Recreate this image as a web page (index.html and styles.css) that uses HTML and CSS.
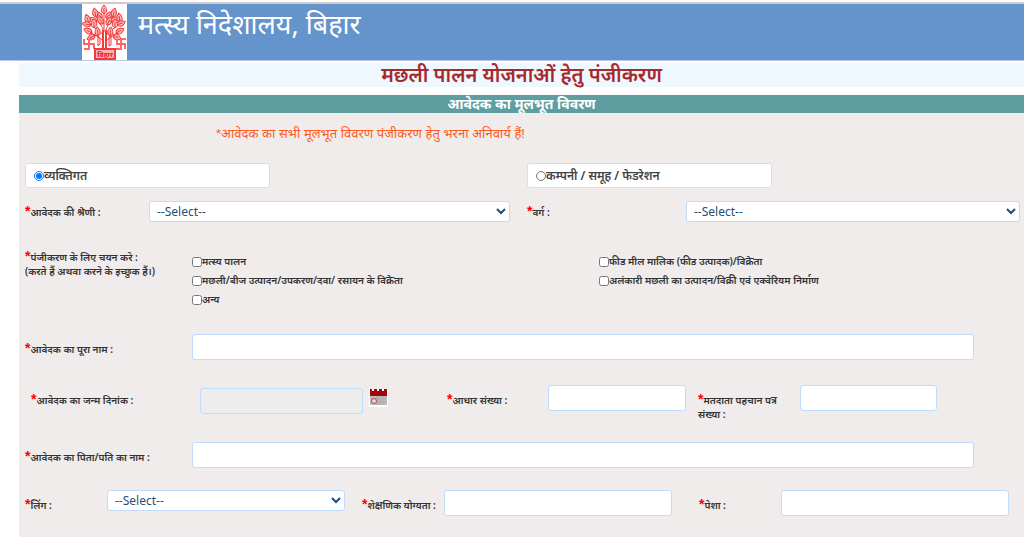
FILE: index.html
```html
<!DOCTYPE html>
<html lang="hi">
<head>
<meta charset="utf-8">
<meta name="viewport" content="width=device-width, initial-scale=1">
<title>मत्स्य निदेशालय, बिहार</title>
<link rel="stylesheet" href="styles.css">
</head>
<body>
<header class="masthead">
  <svg class="logo" viewBox="0 0 45 56" role="img" aria-label="बिहार सरकार">
    <defs>
      <path id="leaf" d="M0 0C-4-2-3-6 0-9C3-6 4-2 0 0ZM0 0V-6"/>
    </defs>
    <rect width="45" height="56" fill="#fff"/>
    <g fill="none" stroke="#f23a3a" stroke-width="1">
      <path stroke-width="2" d="M21 45V26M24 45V26"/>
      <path d="M21 37C18 33 12 31 6 28M24 37C28 33 33 31 38 28M21 31C18 26 11 24 7 19M24 31C28 26 34 24 38 18M22 28C20 21 17 19 14 12M23 28C26 21 28 18 31 12M22 27V9M16 42V32L18 34V40ZM27 42V33L29 32V41Z"/>
      <g fill="#ffb9b9">
        <use href="#leaf" transform="translate(22 10)"/>
        <use href="#leaf" transform="translate(20 14) rotate(-48)"/>
        <use href="#leaf" transform="translate(24 14) rotate(48)"/>
        <use href="#leaf" transform="translate(21 20) rotate(-35)"/>
        <use href="#leaf" transform="translate(25 21) rotate(28)"/>
        <use href="#leaf" transform="translate(14 13) rotate(-12)"/>
        <use href="#leaf" transform="translate(15 18) rotate(-65)"/>
        <use href="#leaf" transform="translate(31 13) rotate(12)"/>
        <use href="#leaf" transform="translate(29 18) rotate(60)"/>
        <use href="#leaf" transform="translate(7 19) rotate(-20)"/>
        <use href="#leaf" transform="translate(9 21) rotate(-80)"/>
        <use href="#leaf" transform="translate(12 24) rotate(0)"/>
        <use href="#leaf" transform="translate(38 18) rotate(-8)"/>
        <use href="#leaf" transform="translate(35 21) rotate(68)"/>
        <use href="#leaf" transform="translate(33 24) rotate(0)"/>
        <use href="#leaf" transform="translate(10 29) rotate(-62)"/>
        <use href="#leaf" transform="translate(13 31) rotate(-120)"/>
        <use href="#leaf" transform="translate(16 32) rotate(-5)"/>
        <use href="#leaf" transform="translate(34 29) rotate(62)"/>
        <use href="#leaf" transform="translate(31 31) rotate(118)"/>
        <use href="#leaf" transform="translate(28 32) rotate(5)"/>
      </g>
      <g stroke="#f66" stroke-width="2">
        <path d="M2 35V40H12V45M7 35V45H2M7 35H12"/>
        <path d="M35 35V40H43V45M39 35V45H34M39 35H44"/>
      </g>
      <rect x="13" y="45" width="20" height="10" fill="#ffb3b3" stroke-width="2"/>
    </g>
    <text class="logo-text" x="23" y="53" text-anchor="middle">बिहार</text>
  </svg>
  <h1 class="site-name">मत्स्य निदेशालय, बिहार</h1>
</header>

<main class="page">
  <h2 class="page-title">मछली पालन योजनाओं हेतु पंजीकरण</h2>
  <h3 class="section-title">आवेदक का मूलभूत विवरण</h3>

  <form class="form">
    <p class="notice">*आवेदक का सभी मूलभूत विवरण पंजीकरण हेतु भरना अनिवार्य हैं!</p>

    <div class="row row-type">
      <label class="choice"><input type="radio" name="type" checked>व्यक्तिगत</label>
      <label class="choice choice-second"><input type="radio" name="type">कम्पनी / समूह / फेडरेशन</label>
    </div>

    <div class="row row-category">
      <label class="label" for="category"><span class="req">*</span>आवेदक की श्रेणी :</label>
      <select class="field select" id="category"><option>--Select--</option></select>
      <label class="label label-third" for="class"><span class="req">*</span>वर्ग :</label>
      <select class="field select" id="class"><option>--Select--</option></select>
    </div>

    <fieldset class="row row-activities" aria-labelledby="activities">
      <div class="label" id="activities"><span class="req">*</span>पंजीकरण के लिए चयन करे :<br>(करते हैं अथवा करने के इच्छुक हैं।)</div>
      <div class="checks">
        <label class="check"><input type="checkbox">मत्स्य पालन</label>
        <label class="check"><input type="checkbox">मछली/बीज उत्पादन/उपकरण/दवा/ रसायन के विक्रेता</label>
        <label class="check"><input type="checkbox">अन्य</label>
      </div>
      <div class="checks">
        <label class="check"><input type="checkbox">फीड मील मालिक (फीड उत्पादक)/विक्रेता</label>
        <label class="check"><input type="checkbox">अलंकारी मछली का उत्पादन/विक्री एवं एक्वेरियम निर्माण</label>
      </div>
    </fieldset>

    <div class="row row-name">
      <label class="label" for="name"><span class="req">*</span>आवेदक का पूरा नाम :</label>
      <input class="field" id="name" type="text">
    </div>

    <div class="row row-identity">
      <label class="label" for="dob"><span class="req">*</span>आवेदक का जन्म दिनांक :</label>
      <div class="date">
        <input class="field" id="dob" type="text" disabled>
        <button class="calendar" type="button" aria-label="दिनांक चुनें">
          <svg viewBox="0 0 19 19" aria-hidden="true">
            <rect y="1" width="19" height="18" fill="#fff"/>
            <rect x="1" y="8" width="17" height="9" fill="#bcbcbc"/>
            <path d="M8 8V17M11 8V17M14 8V17M1 11H18M1 14H18" stroke="#adadad"/>
            <path d="M1 1H3V3H5V1H8V3H10V1H13V3H15V1H18V8H1Z" fill="#a00610"/>
            <circle cx="5" cy="13" r="2.5" fill="#ddd" stroke="#d33c3c"/>
          </svg>
        </button>
      </div>
      <label class="label" for="aadhaar"><span class="req">*</span>आधार संख्या :</label>
      <input class="field" id="aadhaar" type="text">
      <label class="label label-voter" for="voter"><span class="req">*</span>मतदाता पहचान पत्र संख्या :</label>
      <input class="field" id="voter" type="text">
    </div>

    <div class="row row-name row-father">
      <label class="label" for="father"><span class="req">*</span>आवेदक का पिता/पति का नाम :</label>
      <input class="field" id="father" type="text">
    </div>

    <div class="row row-personal">
      <label class="label" for="gender"><span class="req">*</span>लिंग :</label>
      <select class="field select" id="gender"><option>--Select--</option></select>
      <label class="label label-third" for="education"><span class="req">*</span>शेक्षणिक योग्यता :</label>
      <input class="field" id="education" type="text">
      <label class="label label-last" for="job"><span class="req">*</span>पेशा :</label>
      <input class="field" id="job" type="text">
    </div>
  </form>
</main>
</body>
</html>
```
FILE: styles.css
```css
* {
  box-sizing: border-box;
}

body {
  margin: 0;
  background: #fff;
  color: #333;
  font-family: "Noto Sans", "Noto Sans Devanagari", sans-serif;
  font-size: 10px;
}

h1, h2, h3, p {
  margin: 0;
}

input, select, button {
  margin: 0;
  font: inherit;
}

/* Header */
.masthead {
  display: flex;
  align-items: flex-start;
  gap: 11px;
  margin-top: 2px;
  padding-left: 8%;
  border-top: 2px solid #d8c8c8;
  border-bottom: 1px solid #b5cbe8;
  background: #6593cc;
}

.logo {
  width: 45px;
  height: 56px;
  flex: none;
}

.logo-text {
  fill: #e02020;
  font-size: 7px;
  font-weight: 700;
}

.site-name {
  color: #fff;
  font-size: 27px;
  font-weight: 400;
  line-height: 40px;
}

.page {
  margin-left: 19px;
}

.page-title {
  margin: 2px 0 8px;
  background: #eff7ff;
  color: #a52a2a;
  font-size: 20px;
  font-weight: 600;
  line-height: 24px;
  text-align: center;
}

.section-title {
  background: #5f9ea0;
  color: #fff;
  font-size: 14px;
  font-weight: 700;
  line-height: 18px;
  text-align: center;
}

/* Form */
.form {
  min-height: calc(100vh - 113px);
  padding: 11px 0 20px 6px;
  background: #f0eceb;
}

.notice {
  padding-left: 191px;
  color: #ff5a1f;
  font-family: "Liberation Sans", "Noto Sans", "Noto Sans Devanagari", sans-serif;
  font-size: 13px;
  line-height: 20px;
}

.row {
  display: grid;
  align-items: start;
}

.row-type {
  grid-template-columns: 245fr 257fr 245fr 252fr;
  margin-top: 19px;
}

.choice {
  display: flex;
  align-items: center;
  height: 25px;
  padding-left: 8px;
  border: 1px solid #ddd;
  border-radius: 3px;
  background: #fff;
  color: #444;
  font-size: 12px;
  font-weight: 600;
}

.choice-second {
  grid-column: 3;
}

.choice input {
  width: 10px;
  height: 10px;
}

.label {
  padding-top: 4px;
  font-weight: 600;
  line-height: 14px;
}

.req {
  color: #f00;
  font-family: "Liberation Sans", sans-serif;
  font-size: 14px;
  font-weight: 700;
  line-height: 10px;
}

.field {
  width: 100%;
  min-width: 0;
  height: 26px;
  padding: 0 6px;
  border: 1px solid #bfdcfb;
  border-radius: 3px;
  background: #fff;
}

.field:disabled {
  background: #ededed;
}

.select {
  height: 21px;
  padding: 0 0 0 3px;
  color: #1f4e79;
  font-size: 12px;
}

.row-category {
  grid-template-columns: 124fr 361fr 176fr 334fr 4fr;
  margin-top: 13px;
}

.label-third {
  padding-left: 17px;
}

.row-activities {
  grid-template-columns: 167fr 407fr 425fr;
  margin: 24px 0 0;
  padding: 0;
  border: 0;
}

.checks {
  display: grid;
  padding-top: 6px;
}

.check {
  display: flex;
  align-items: center;
  font-weight: 600;
  line-height: 19px;
}

.check input {
  width: 10px;
  height: 10px;
}

.row-name {
  grid-template-columns: 167fr 782fr 50fr;
  margin-top: 25px;
}

.row-name .label {
  padding-top: 8px;
}

.row-identity {
  grid-template-columns: 169fr 247fr 101fr 138fr 114fr 137fr 87fr;
  margin-top: 25px;
  padding-left: 6px;
}

.row-identity .label {
  padding-top: 8px;
}

.row-identity .label-voter {
  padding-left: 12px;
}

.date {
  display: flex;
  align-items: flex-start;
  gap: 6px;
  padding-top: 3px;
}

.date .field {
  width: 66%;
}

.calendar {
  width: 19px;
  height: 19px;
  padding: 0;
  border: 0;
  background: none;
}

.calendar svg {
  display: block;
}

.row-father {
  margin-top: 21px;
}

.row-personal {
  grid-template-columns: 82fr 238fr 99fr 228fr 109fr 228fr 15fr;
  margin-top: 22px;
}

.row-personal .label {
  padding-top: 8px;
}

.label-last {
  padding-left: 27px;
}
```
